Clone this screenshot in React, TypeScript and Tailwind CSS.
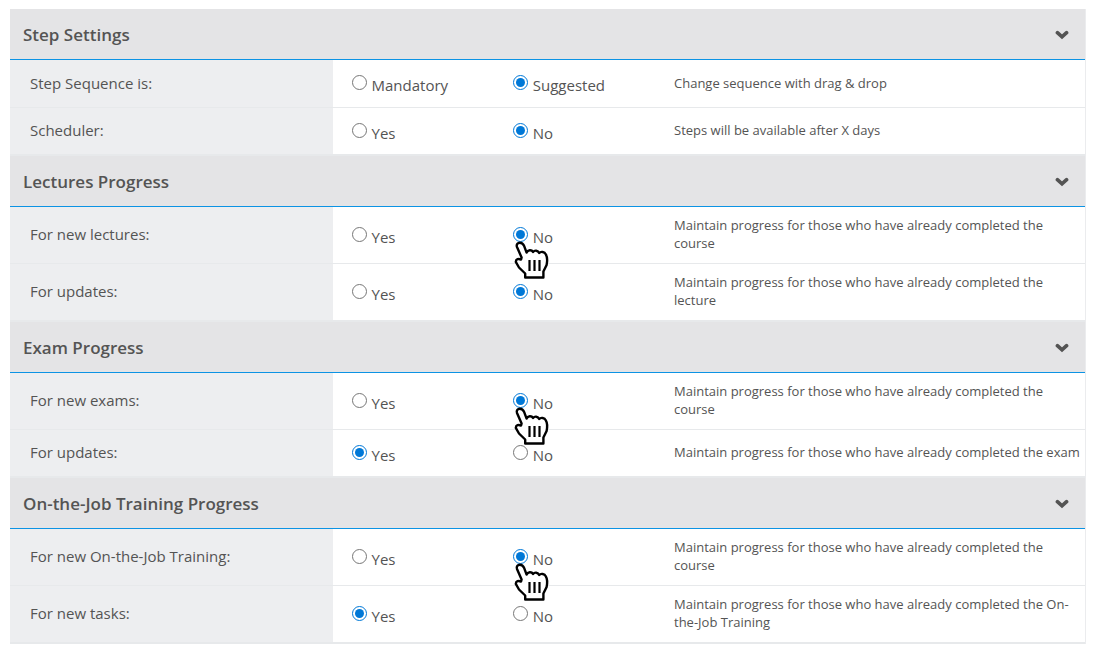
import React, { useState } from "react";

type Row = {
  id: string;
  label: string;
  options: [string, string];
  value: string;
  hint: string;
  pointer?: boolean;
};

type Section = {
  title: string;
  rows: Row[];
};

const YES_NO: [string, string] = ["Yes", "No"];

const sections: Section[] = [
  {
    title: "Step Settings",
    rows: [
      { id: "sequence", label: "Step Sequence is:", options: ["Mandatory", "Suggested"], value: "Suggested", hint: "Change sequence with drag & drop" },
      { id: "scheduler", label: "Scheduler:", options: YES_NO, value: "No", hint: "Steps will be available after X days" },
    ],
  },
  {
    title: "Lectures Progress",
    rows: [
      { id: "new-lectures", label: "For new lectures:", options: YES_NO, value: "No", hint: "Maintain progress for those who have already completed the course", pointer: true },
      { id: "lecture-updates", label: "For updates:", options: YES_NO, value: "No", hint: "Maintain progress for those who have already completed the lecture" },
    ],
  },
  {
    title: "Exam Progress",
    rows: [
      { id: "new-exams", label: "For new exams:", options: YES_NO, value: "No", hint: "Maintain progress for those who have already completed the course", pointer: true },
      { id: "exam-updates", label: "For updates:", options: YES_NO, value: "Yes", hint: "Maintain progress for those who have already completed the exam" },
    ],
  },
  {
    title: "On-the-Job Training Progress",
    rows: [
      { id: "new-training", label: "For new On-the-Job Training:", options: YES_NO, value: "No", hint: "Maintain progress for those who have already completed the course", pointer: true },
      { id: "new-tasks", label: "For new tasks:", options: YES_NO, value: "Yes", hint: "Maintain progress for those who have already completed the On-the-Job Training" },
    ],
  },
];

const Chevron = () => (
  <svg width="14" height="10" viewBox="0 0 14 10" fill="none" aria-hidden="true">
    <path d="M2.4 2.6 7 6.8l4.6-4.2" stroke="#545454" strokeWidth="3.6" strokeLinecap="round" strokeLinejoin="miter" />
  </svg>
);

const HandPointer = () => (
  <svg
    className="pointer-events-none absolute -left-0.5 top-full z-10 -mt-2"
    width="42"
    height="42"
    viewBox="0 0 42 42"
    aria-hidden="true"
  >
    <path
      d="M6 8C5 5.4 7 3.6 9 3.7C11 3.8 12.4 5 13.2 7.2L15.6 13.6C16.8 10.6 20.6 10.4 22 13C23.6 11 27 11.2 28.2 14C29.8 12.2 33.6 12.6 34.8 15.4C36.4 18 36.4 22 35.6 26L32.4 32.5V38.5H14.2V34.5L8 28.5L4.8 22.8C5 20 7.5 19.4 10 20.6L10.6 18.5Z"
      fill="#fff"
      stroke="#000"
      strokeWidth="2.4"
      strokeLinejoin="round"
    />
    <path d="M18.5 21v11M23.5 21v11M28.5 21v11" stroke="#000" strokeWidth="2.2" />
  </svg>
);

const SettingRow = ({ row }: { row: Row }) => {
  const [value, setValue] = useState(row.value);

  return (
    <div
      role="radiogroup"
      aria-labelledby={row.id}
      className="grid min-h-12 grid-cols-[30%_15%_15%_40%] border-b border-[#e7e9eb] last:border-b-2"
    >
      <div id={row.id} className="flex items-center bg-[#edeef0] pb-0.5 pl-5 text-[15px] leading-5">
        {row.label}
      </div>
      {row.options.map((option, i) => (
        <div key={option} className="flex items-center pl-[19px] pt-[3px]">
          <div className="relative">
            <label className="flex items-start gap-[5px] text-[15px] leading-5">
              <input
                type="radio"
                name={row.id}
                checked={value === option}
                onChange={() => setValue(option)}
                className="size-[15px] accent-[#0078d7]"
              />
              <span>{option}</span>
            </label>
            {row.pointer && i === 1 && <HandPointer />}
          </div>
        </div>
      ))}
      <div className="flex items-center pb-[11px] pl-[19px] pr-1 pt-[9px] text-[13px] leading-[18px]">
        <p>{row.hint}</p>
      </div>
    </div>
  );
};

export default function App() {
  return (
    <main className="bg-white py-[9px] pl-2.5 pr-2 font-['Open_Sans',sans-serif] text-[#545454]">
      <div className="border-r border-[#ebecee]">
        {sections.map((section) => (
          <section key={section.title}>
            <button
              type="button"
              className="flex h-[51px] w-full items-center justify-between border-b border-[#0c93e4] bg-[#e4e4e6] pl-[13px] pr-4 pt-0.5"
            >
              <h2 className="text-[17px] font-semibold leading-6">{section.title}</h2>
              <Chevron />
            </button>
            <div>
              {section.rows.map((row) => (
                <SettingRow key={row.id} row={row} />
              ))}
            </div>
          </section>
        ))}
      </div>
    </main>
  );
}
